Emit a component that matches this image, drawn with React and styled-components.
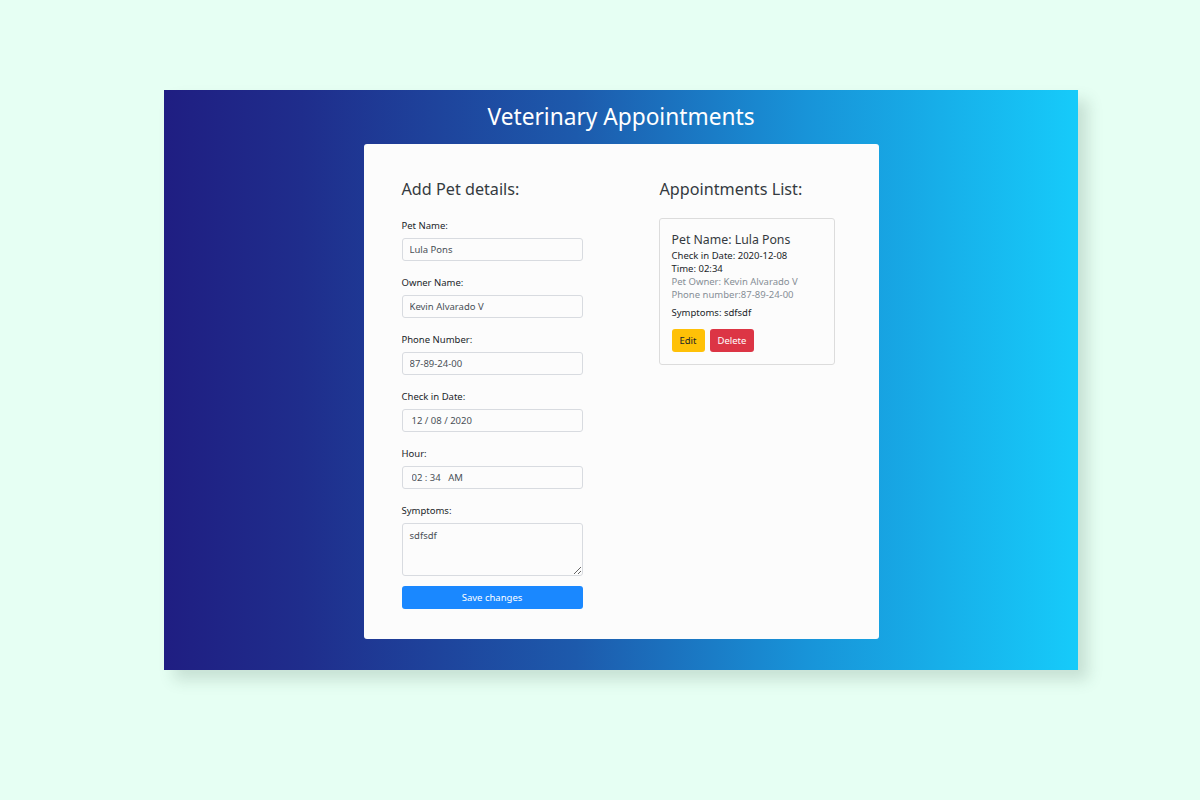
import styled, { createGlobalStyle } from "styled-components"

const GlobalStyle = createGlobalStyle`
    body {
        margin: 0;
        background: #e6fff3;
        font-family: "Noto Sans", "Open Sans", sans-serif;
    }
`

const Page = styled.div`
    width: 1200px;
    height: 800px;
    padding-top: 90px;
    box-sizing: border-box;
`

const Panel = styled.div`
    margin-left: 164px;
    width: 914px;
    height: 580px;
    background: linear-gradient(to right, #1f1e82 0%, #1f2d8c 15%, #1d5aac 45%, #1893d8 70%, #16cbfa 100%);
    box-shadow: 10px 10px 14px rgba(60, 90, 80, 0.18);
    display: flex;
    flex-direction: column;
    align-items: center;
`

const Title = styled.h1`
    margin: 0;
    height: 54px;
    line-height: 54px;
    color: #fff;
    font-size: 22.7px;
    font-weight: 400;
`

const Card = styled.div`
    width: 515px;
    height: 495px;
    background: #fcfcfc;
    border-radius: 3px;
    box-sizing: border-box;
    padding: 34px 0 0 38px;
    display: grid;
    grid-template-columns: 257px 176px;
`

const Column = styled.div`
    display: flex;
    flex-direction: column;
`

const Heading = styled.h2`
    margin: 0 0 ${(p) => p.$gap}px;
    padding-left: ${(p) => (p.$indent ? "1px" : "0")};
    color: #343a40;
    font-size: 16.2px;
    font-weight: 400;
    line-height: 22px;
`

const Field = styled.div`
    display: flex;
    flex-direction: column;
    width: 181px;
    margin-bottom: 16px;
`

const Label = styled.label`
    color: #212529;
    font-size: 9.5px;
    line-height: 12px;
    margin-bottom: 6px;
`

const Input = styled.input`
    height: 23px;
    box-sizing: border-box;
    border: 1px solid #d8dbe0;
    border-radius: 3px;
    background: #fcfcfc;
    padding: 0 ${(p) => (p.$inset ? "9px" : "7px")};
    color: #495057;
    font-family: inherit;
    font-size: 9.5px;
    outline: none;
`

const TextArea = styled.textarea`
    height: 53px;
    box-sizing: border-box;
    border: 1px solid #d8dbe0;
    border-radius: 3px;
    background: #fcfcfc;
    padding: 5px 7px;
    color: #495057;
    font-family: inherit;
    font-size: 9.5px;
    outline: none;
`

const SaveButton = styled.button`
    width: 181px;
    height: 23px;
    margin-top: -6px;
    border: none;
    border-radius: 3px;
    background: #1a88ff;
    color: #fff;
    font-family: inherit;
    font-size: 9.5px;
`

const Appointment = styled.div`
    border: 1px solid #dcdcdc;
    border-radius: 3px;
    padding: 12px;
    box-sizing: border-box;
    width: 176px;
`

const PetName = styled.div`
    color: #343a40;
    font-size: 12.3px;
    line-height: 18px;
`

const Line = styled.div`
    color: ${(p) => (p.$muted ? "#868e96" : "#212529")};
    font-size: 9.5px;
    line-height: 13px;
`

const Symptoms = styled(Line)`
    margin-top: 5px;
`

const Actions = styled.div`
    display: flex;
    gap: 5px;
    margin-top: 10px;
`

const ActionButton = styled.button`
    height: 23px;
    padding: 0 8px;
    border: none;
    border-radius: 3px;
    background: ${(p) => (p.$danger ? "#dc3545" : "#ffc107")};
    color: ${(p) => (p.$danger ? "#fff" : "#212529")};
    font-family: inherit;
    font-size: 9.5px;
`

const fields = [
    { label: "Pet Name:", value: "Lula Pons" },
    { label: "Owner Name:", value: "Kevin Alvarado V" },
    { label: "Phone Number:", value: "87-89-24-00" },
    { label: "Check in Date:", value: "12 / 08 / 2020", inset: true },
    { label: "Hour:", value: "02 : 34   AM", inset: true },
]

const App = () => {
    return (
        <>
            <GlobalStyle />
            <Page>
                <Panel>
                    <Title>Veterinary Appointments</Title>
                    <Card>
                        <Column>
                            <Heading $gap={20}>Add Pet details:</Heading>
                            {fields.map((f) => (
                                <Field key={f.label}>
                                    <Label>{f.label}</Label>
                                    <Input readOnly defaultValue={f.value} $inset={f.inset} />
                                </Field>
                            ))}
                            <Field>
                                <Label>Symptoms:</Label>
                                <TextArea readOnly defaultValue="sdfsdf" />
                            </Field>
                            <SaveButton>Save changes</SaveButton>
                        </Column>
                        <Column>
                            <Heading $gap={18} $indent>Appointments List:</Heading>
                            <Appointment>
                                <PetName>Pet Name: Lula Pons</PetName>
                                <Line>Check in Date: 2020-12-08</Line>
                                <Line>Time: 02:34</Line>
                                <Line $muted>Pet Owner: Kevin Alvarado V</Line>
                                <Line $muted>Phone number:87-89-24-00</Line>
                                <Symptoms>Symptoms: sdfsdf</Symptoms>
                                <Actions>
                                    <ActionButton>Edit</ActionButton>
                                    <ActionButton $danger>Delete</ActionButton>
                                </Actions>
                            </Appointment>
                        </Column>
                    </Card>
                </Panel>
            </Page>
        </>
    )
}

export default App
